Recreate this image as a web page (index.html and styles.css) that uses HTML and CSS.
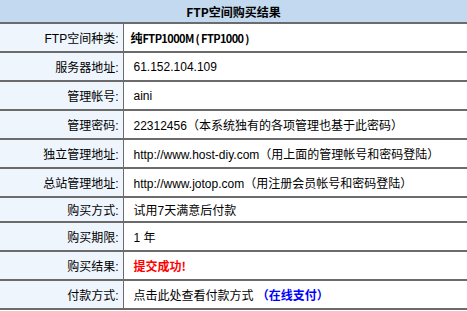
FILE: index.html
```html
<!DOCTYPE html>
<html lang="zh-CN">
<head>
<meta charset="utf-8">
<title>FTP空间购买结果</title>
<link rel="stylesheet" href="styles.css">
</head>
<body>
<table class="result">
  <colgroup>
    <col class="col-label">
    <col class="col-value">
  </colgroup>
  <thead>
    <tr><th colspan="2" class="title">FTP空间购买结果</th></tr>
  </thead>
  <tbody>
    <tr><td class="label">FTP空间种类:</td><td class="value"><b class="plan"><span class="plan-cjk">纯</span>FTP1000M ( FTP1000 )</b></td></tr>
    <tr><td class="label">服务器地址:</td><td class="value">61.152.104.109</td></tr>
    <tr><td class="label">管理帐号:</td><td class="value">aini</td></tr>
    <tr><td class="label">管理密码:</td><td class="value">22312456（本系统独有的各项管理也基于此密码）</td></tr>
    <tr><td class="label">独立管理地址:</td><td class="value">http://www.host-diy.com（用上面的管理帐号和密码登陆）</td></tr>
    <tr><td class="label">总站管理地址:</td><td class="value">http://www.jotop.com（用注册会员帐号和密码登陆）</td></tr>
    <tr class="short"><td class="label">购买方式:</td><td class="value">试用7天满意后付款</td></tr>
    <tr><td class="label">购买期限:</td><td class="value">1 年</td></tr>
    <tr><td class="label">购买结果:</td><td class="value"><b class="ok">提交成功!</b></td></tr>
    <tr><td class="label">付款方式:</td><td class="value">点击此处查看付款方式 <b class="pay">（在线支付）</b></td></tr>
  </tbody>
</table>
</body>
</html>
```

FILE: styles.css
```css
html, body {
  margin: 0;
  padding: 0;
  background: #ffffff;
}

body {
  font-family: "Liberation Sans", "Noto Sans CJK SC", sans-serif;
  font-size: 12px;
  color: #000000;
}

.result {
  width: 467px;
  border-collapse: collapse;
  table-layout: fixed;
}

.col-label {
  width: 123px;
}

.result th,
.result td {
  padding: 0;
  border-bottom: 2px solid #6b6b6b;
  white-space: nowrap;
}

.title {
  height: 22px;
  background: #c3d9ef;
  font-family: "Noto Sans CJK SC", sans-serif;
  font-weight: bold;
  text-align: center;
}

.label {
  height: 27px;
  padding-right: 4px !important;
  text-align: right;
  background: #eef5fd;
  border-right: 1px solid #6b6b6b;
}

.value {
  height: 27px;
  padding-left: 10px !important;
  text-align: left;
}

.short .label,
.short .value {
  height: 23px;
}

/* bold values are set in the CJK face, like the rest of the emphasised text */
.plan,
.ok,
.pay {
  font-family: "Noto Sans CJK SC", sans-serif;
  font-weight: bold;
}

.plan {
  margin-left: -3px;
  font-size: 11px;
  letter-spacing: -0.6px;
}

.plan-cjk {
  font-size: 12px;
  letter-spacing: 0;
}

.ok {
  color: #ff0000;
}

.pay {
  color: #0000ff;
}
```
